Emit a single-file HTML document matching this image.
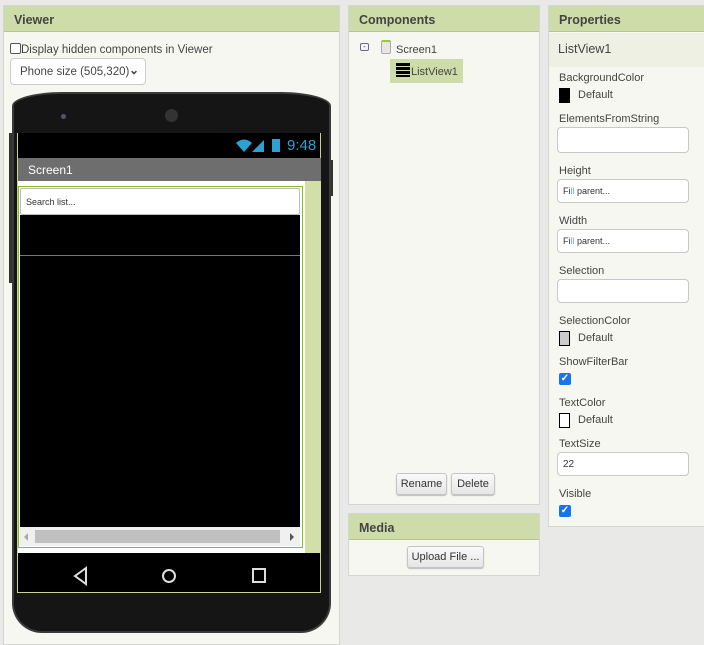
<!DOCTYPE html>
<html><head><style>
*{box-sizing:border-box;margin:0;padding:0}
body{width:704px;height:643px;overflow:hidden;background:#e9e9e7;font-family:"Liberation Sans",sans-serif;font-size:12px;color:#333;position:relative}
.abs{position:absolute}
.panel{position:absolute;background:#f7f7f1;border:1px solid #d6d6d0}
.hdr{position:absolute;left:0;right:0;top:0;height:26px;background:#cedcaa;border-bottom:1px solid #b8c496;font-weight:bold;font-size:12.5px;color:#444;padding:7px 0 0 10px}
.lbl{position:absolute;left:10px;font-size:11px;color:#444}
.inp{position:absolute;left:8px;width:132px;height:24px;background:#fff;border:1px solid #c8c8c8;border-radius:4px;font-size:9px;padding:6px 0 0 5px;color:#333}
.sw{position:absolute;left:10px;width:11px;height:15px;border:1px solid #000}
.def{position:absolute;left:29px;font-size:11px;color:#444}
.cb{position:absolute;left:10px;width:12px;height:12px;background:#1a73e8;border-radius:2px;color:#fff;font-size:10px;line-height:12px;text-align:center;font-weight:bold}
.btn{position:absolute;height:22px;background:linear-gradient(#fafafa,#e6e6e6);border:1px solid #c4c4c4;border-radius:3px;font-size:11px;color:#333;text-align:center;line-height:20px;box-shadow:0 1px 1px #bbb}
</style></head><body>
<!-- Viewer -->
<div class="panel" style="left:3px;top:5px;width:337px;height:640px">
<div class="hdr">Viewer</div>
<div class="abs" style="left:6px;top:37px;font-size:11.5px;color:#444"><span style="display:inline-block;width:11px;height:11px;border:1px solid #555;border-radius:2px;vertical-align:-1px;background:#fff"></span>Display hidden components in Viewer</div>
<div class="abs" style="left:6px;top:52px;width:136px;height:27px;background:#fff;border:1px solid #ccc;border-radius:4px;font-size:11.5px;color:#444;padding:7px 0 0 9px">Phone size (505,320)<span style="position:absolute;right:6px;top:4px;font-size:12px;font-weight:bold">&#8964;</span></div>
</div>
<!-- phone -->
<div class="abs" style="left:9px;top:133px;width:4px;height:150px;background:#333"></div>
<div class="abs" style="left:328px;top:160px;width:5px;height:36px;background:#333"></div>
<div class="abs" style="left:12px;top:92px;width:319px;height:541px;background:#151515;border-radius:50px 50px 30px 30px/14px 14px 30px 30px;border:2px solid #3a3a3a"></div>
<div class="abs" style="left:61px;top:114px;width:5px;height:5px;border-radius:50%;background:#556"></div>
<div class="abs" style="left:165px;top:109px;width:13px;height:13px;border-radius:50%;background:#333"></div>
<div class="abs" style="left:17px;top:133px;width:304px;height:460px;background:#000;border:1px solid #c9d494;border-top:none"></div>
<svg class="abs" style="left:236px;top:138px" width="48" height="16"><path d="M0 5 Q8 -2 16 5 L8 14 Z" fill="#2aa3d4"/><path d="M16 14 L28 2 L28 14Z" fill="#2aa3d4"/><rect x="36" y="1" width="8" height="13" fill="#2aa3d4"/></svg>
<div class="abs" style="left:287px;top:137px;color:#2aa3d4;font-size:15px">9:48</div>
<div class="abs" style="left:18px;top:158px;width:303px;height:23px;background:#6e6e6e;color:#fff;font-size:12px;padding:5px 0 0 10px">Screen1</div>
<div class="abs" style="left:18px;top:181px;width:303px;height:372px;background:#fff"></div>
<div class="abs" style="left:305px;top:181px;width:16px;height:372px;background:#d2dfa8"></div>
<div class="abs" style="left:18px;top:186px;width:285px;height:362px;border:1px solid #8cb82a;background:#fff"></div>
<div class="abs" style="left:20px;top:188px;width:280px;height:27px;background:#fff;border:1px solid #bbb;border-radius:2px;font-size:9px;padding:8px 0 0 5px;color:#333">Search list...</div>
<div class="abs" style="left:20px;top:215px;width:280px;height:312px;background:#000"></div>
<div class="abs" style="left:20px;top:255px;width:280px;height:1px;background:#777"></div>
<div class="abs" style="left:20px;top:527px;width:280px;height:19px;background:#f0f0f0"></div>
<div class="abs" style="left:35px;top:530px;width:245px;height:13px;background:#c0c0c0"></div>
<div class="abs" style="left:24px;top:533px;border:4px solid transparent;border-right:4px solid #aaa;border-left:none"></div>
<div class="abs" style="left:290px;top:533px;border:4px solid transparent;border-left:4px solid #555;border-right:none"></div>
<svg class="abs" style="left:70px;top:565px" width="200" height="22"><path d="M16 3 L5 11 L16 19Z" fill="none" stroke="#ddd" stroke-width="2"/><circle cx="99" cy="11" r="6" fill="none" stroke="#ddd" stroke-width="2"/><rect x="183" y="4" width="12" height="13" fill="none" stroke="#ddd" stroke-width="2"/></svg>
<!-- Components -->
<div class="panel" style="left:348px;top:5px;width:192px;height:500px">
<div class="hdr">Components</div>
<div class="abs" style="left:11px;top:37px;width:9px;height:8px;border:1px solid #669;border-radius:2px;font-size:8px;line-height:5px;text-align:center;color:#336">-</div>
<div class="abs" style="left:32px;top:34px;width:10px;height:14px;background:#e6e6e6;border:1px solid #aaa;border-top:2px solid #9c3;border-radius:2px"></div>
<div class="abs" style="left:47px;top:38px;font-size:11px;color:#444">Screen1</div>
<div class="abs" style="left:41px;top:53px;width:73px;height:24px;background:#cedcaa"></div>
<div class="abs" style="left:47px;top:57px;width:14px;height:14px;background:repeating-linear-gradient(#000 0 3px,#cedcaa 3px 4px)"></div>
<div class="abs" style="left:62px;top:60px;font-size:11px;color:#444">ListView1</div>
<div class="btn" style="left:47px;top:467px;width:51px">Rename</div>
<div class="btn" style="left:102px;top:467px;width:44px">Delete</div>
</div>
<!-- Media -->
<div class="panel" style="left:348px;top:513px;width:192px;height:63px">
<div class="hdr">Media</div>
<div class="btn" style="left:58px;top:32px;width:77px">Upload File ...</div>
</div>
<!-- Properties -->
<div class="panel" style="left:548px;top:5px;width:160px;height:522px">
<div class="hdr">Properties</div>
<div class="abs" style="left:0;right:0;top:27px;height:34px;background:#edf0e2;font-size:12.5px;color:#444;padding:9px 0 0 9px">ListView1</div>
<div class="lbl" style="top:66px">BackgroundColor</div>
<div class="sw" style="top:82px;background:#000"></div><div class="def" style="top:83px">Default</div>
<div class="lbl" style="top:107px">ElementsFromString</div>
<div class="inp" style="top:121px;height:26px"></div>
<div class="lbl" style="top:159px">Height</div>
<div class="inp" style="top:173px">Fi<span style="color:#6af">ll</span> parent...</div>
<div class="lbl" style="top:209px">Width</div>
<div class="inp" style="top:223px">Fi<span style="color:#6af">ll</span> parent...</div>
<div class="lbl" style="top:259px">Selection</div>
<div class="inp" style="top:273px"></div>
<div class="lbl" style="top:309px">SelectionColor</div>
<div class="sw" style="top:325px;background:#ccc"></div><div class="def" style="top:326px">Default</div>
<div class="lbl" style="top:350px">ShowFilterBar</div>
<div class="cb" style="top:367px">&#10003;</div>
<div class="lbl" style="top:391px">TextColor</div>
<div class="sw" style="top:407px;background:#fff"></div><div class="def" style="top:408px">Default</div>
<div class="lbl" style="top:432px">TextSize</div>
<div class="inp" style="top:446px;font-size:10px">22</div>
<div class="lbl" style="top:482px">Visible</div>
<div class="cb" style="top:499px">&#10003;</div>
</div>
</body></html>
